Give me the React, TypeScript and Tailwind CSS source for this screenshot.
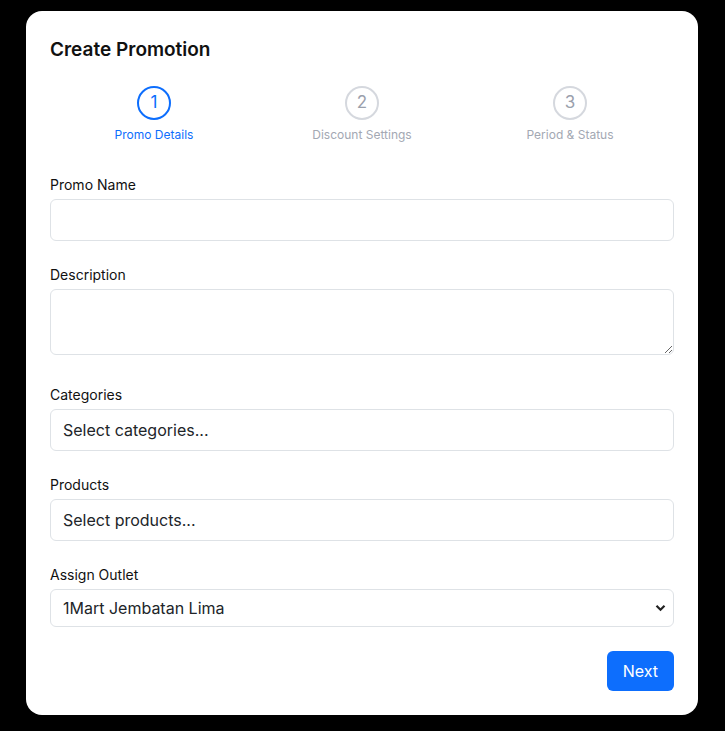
import React, { useState } from 'react';

const steps = [
  { num: 1, label: 'Promo Details' },
  { num: 2, label: 'Discount Settings' },
  { num: 3, label: 'Period & Status' },
];

const outlets = ['1Mart Jembatan Lima', '1Mart Tanah Abang', '1Mart Kemayoran'];

const App: React.FC = () => {
  const [current] = useState(1);
  const [promoName, setPromoName] = useState('');
  const [description, setDescription] = useState('');
  const [outlet, setOutlet] = useState(outlets[0]);

  return (
    <div className="min-h-screen bg-black pt-[11px] pb-4" style={{ fontFamily: 'Inter, "Noto Sans", sans-serif' }}>
      <div className="w-[672px] ml-[26px] bg-white rounded-2xl p-6 text-[#212529]">
        <h2 className="mt-px text-[19px] leading-7 font-semibold text-[#111]">Create Promotion</h2>

        {/* stepper */}
        <div className="grid grid-cols-3 mt-[22px]">
          {steps.map(s => {
            const active = s.num === current;
            return (
              <div key={s.num} className="flex flex-col items-center">
                <div
                  className={`w-[34px] h-[34px] rounded-full border-2 flex items-center justify-center text-[17px] ${
                    active ? 'border-[#0d6efd] text-[#0d6efd]' : 'border-[#d5d8de] text-[#9aa0ac]'
                  }`}
                >
                  {s.num}
                </div>
                <span className={`mt-[7px] text-xs leading-4 ${active ? 'text-[#0d6efd]' : 'text-[#a3a8b3]'}`}>
                  {s.label}
                </span>
              </div>
            );
          })}
        </div>

        <form className="mt-[32px]" onSubmit={e => e.preventDefault()}>
          <div className="mb-6">
            <label className="block text-sm leading-5 mb-1 text-[#111]">Promo Name</label>
            <input
              value={promoName}
              onChange={e => setPromoName(e.target.value)}
              className="block w-full h-[42px] px-3 border border-[#dee2e6] rounded-md text-base outline-none"
            />
          </div>

          <div className="mb-[30px]">
            <label className="block text-sm leading-5 mb-1 text-[#111]">Description</label>
            <textarea
              value={description}
              onChange={e => setDescription(e.target.value)}
              className="block w-full h-[66px] px-3 py-2 border border-[#dee2e6] rounded-md text-base outline-none"
            />
          </div>

          <div className="mb-6">
            <label className="block text-sm leading-5 mb-1 text-[#111]">Categories</label>
            <div className="h-[42px] px-3 border border-[#dee2e6] rounded-md flex items-center text-base text-[#212529]">
              Select categories...
            </div>
          </div>

          <div className="mb-6">
            <label className="block text-sm leading-5 mb-1 text-[#111]">Products</label>
            <div className="h-[42px] px-3 border border-[#dee2e6] rounded-md flex items-center text-base text-[#212529]">
              Select products...
            </div>
          </div>

          <div className="mb-6">
            <label className="block text-sm leading-5 mb-1 text-[#111]">Assign Outlet</label>
            <div className="relative">
              <select
                value={outlet}
                onChange={e => setOutlet(e.target.value)}
                className="block w-full h-[38px] pl-3 pr-8 border border-[#dee2e6] rounded-md text-base bg-white appearance-none outline-none"
              >
                {outlets.map(o => (
                  <option key={o}>{o}</option>
                ))}
              </select>
              <svg
                className="absolute right-[8px] top-1/2 -translate-y-1/2 pointer-events-none"
                width="11"
                height="8"
                viewBox="0 0 11 8"
                fill="none"
              >
                <path d="M1.5 1.8 5.5 5.8 9.5 1.8" stroke="#222" strokeWidth="2.2" />
              </svg>
            </div>
          </div>

          <div className="flex justify-end">
            <button type="submit" className="h-10 px-4 rounded-md bg-[#0d6efd] text-white text-base">
              Next
            </button>
          </div>
        </form>
      </div>
    </div>
  );
};

export default App;
